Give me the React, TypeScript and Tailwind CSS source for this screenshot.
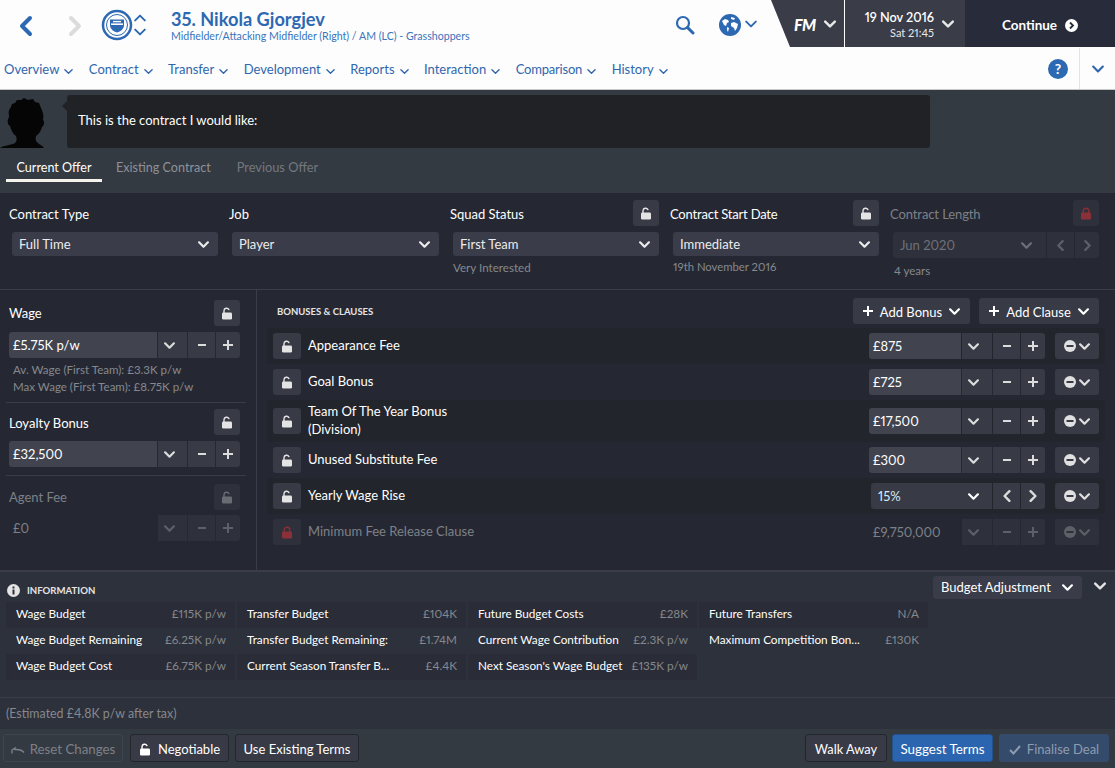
import React from 'react';

const Chev = ({ dir = 'down', size = 10, w = 2, className = '' }: { dir?: 'down' | 'up' | 'left' | 'right'; size?: number; w?: number; className?: string }) => {
    const d = {
        down: 'M1 3l4 4 4-4',
        up: 'M1 7l4-4 4 4',
        left: 'M7 1L3 5l4 4',
        right: 'M3 1l4 4-4 4',
    }[dir];
    return (
        <svg width={size} height={size} viewBox="0 0 10 10" fill="none" stroke="currentColor" strokeWidth={w} strokeLinecap="round" strokeLinejoin="round" className={className}>
            <path d={d} />
        </svg>
    );
};

const LockIcon = ({ closed = false }: { closed?: boolean }) => (
    <svg width="12" height="13" viewBox="0 0 12 13" fill="currentColor">
        {closed ? (
            <path d="M3.2 6V4a2.8 2.8 0 0 1 5.6 0v2" fill="none" stroke="currentColor" strokeWidth="1.4" />
        ) : (
            <path d="M3 6V3.8A2.6 2.6 0 0 1 7.9 2.6" fill="none" stroke="currentColor" strokeWidth="1.4" strokeLinecap="round" />
        )}
        <rect x="1" y="5.6" width="10" height="7" rx="1.4" />
    </svg>
);

const LockBtn = ({ w = 'w-[26px]', tone = 'normal' }: { w?: string; tone?: 'normal' | 'dim' | 'red' }) => {
    const cls =
        tone === 'normal'
            ? 'bg-[#383a46] text-[#e4e4e4]'
            : tone === 'dim'
              ? 'bg-[#2e303b] text-[#6a6c74]'
              : 'bg-[#2e303b] text-[#8a3038]';
    return (
        <div className={`${w} h-[26px] rounded-[3px] flex items-center justify-center shrink-0 ${cls}`}>
            <LockIcon closed={tone === 'red'} />
        </div>
    );
};

const Minus = () => <div className="w-[8px] h-[2px] bg-current" />;
const Plus = () => (
    <svg width="10" height="10" viewBox="0 0 10 10" stroke="currentColor" strokeWidth="2">
        <path d="M0 5h10M5 0v10" />
    </svg>
);

const Seg = ({ w, dim, last, children }: { w: string; dim?: boolean; last?: boolean; children: React.ReactNode }) => (
    <div className={`${w} h-full flex items-center justify-center ${dim ? 'bg-[#2e303b] text-[#5e6068]' : 'bg-[#383a46] text-[#dcdcdc]'} ${last ? 'rounded-r-[3px]' : ''}`}>
        {children}
    </div>
);

const Stepper = ({ value, inputW, chevW, dim }: { value: string; inputW: string; chevW: string; dim?: boolean }) => (
    <div className="h-[26px] flex gap-px text-[13px]">
        <div className={`${inputW} h-full rounded-l-[3px] flex items-center pl-[4px] pt-px ${dim ? 'text-[#7e8087]' : 'bg-[#41444f] text-white'}`}>{value}</div>
        <Seg w={chevW} dim={dim}><Chev size={11} className="mr-[7px]" /></Seg>
        <Seg w="w-[27px]" dim={dim}><Minus /></Seg>
        <Seg w="w-[24px]" dim={dim} last><Plus /></Seg>
    </div>
);

const RemoveBtn = ({ dim }: { dim?: boolean }) => (
    <div className={`w-[44px] h-[26px] rounded-[3px] flex items-center justify-center gap-[3px] shrink-0 ${dim ? 'bg-[#2e303b] text-[#5e6068]' : 'bg-[#383a46] text-[#e0e0e0]'}`}>
        <svg width="12" height="12" viewBox="0 0 12 12">
            <circle cx="6" cy="6" r="6" fill="currentColor" />
            <rect x="2.5" y="5" width="7" height="2" fill={dim ? '#2e303b' : '#383a46'} />
        </svg>
        <Chev size={11} />
    </div>
);

const Select = ({ label }: { label: string }) => (
    <div className="ml-[3px] h-[24px] rounded-[3px] bg-[#3a3c49] text-[#ececec] text-[13px] flex items-center justify-between pl-[7px] pr-[9px]">
        <span className="pt-px">{label}</span>
        <Chev size={11} />
    </div>
);

const bonusRows = [
    { label: 'Appearance Fee', value: '£875', h: 'h-[36px]', dark: true },
    { label: 'Goal Bonus', value: '£725', h: 'h-[36px]' },
    { label: 'Team Of The Year Bonus', label2: '(Division)', value: '£17,500', h: 'h-[42px]', dark: true },
    { label: 'Unused Substitute Fee', value: '£300', h: 'h-[36px]' },
];

const info = [
    [
        ['Wage Budget', '£115K p/w'],
        ['Transfer Budget', '£104K'],
        ['Future Budget Costs', '£28K'],
        ['Future Transfers', 'N/A'],
    ],
    [
        ['Wage Budget Remaining', '£6.25K p/w'],
        ['Transfer Budget Remaining:', '£1.74M'],
        ['Current Wage Contribution', '£2.3K p/w'],
        ['Maximum Competition Bon...', '£130K'],
    ],
    [
        ['Wage Budget Cost', '£6.75K p/w'],
        ['Current Season Transfer B...', '£4.4K'],
        ["Next Season's Wage Budget", '£135K p/w'],
    ],
];

const navItems = ['Overview', 'Contract', 'Transfer', 'Development', 'Reports', 'Interaction', 'Comparison', 'History'];

export default function App() {
    return (
        <div className="w-[1115px] h-[768px] overflow-hidden flex flex-col font-['Lato','Noto_Sans',sans-serif] proportional-nums text-[13px] bg-[#252833]">
            {/* top bar */}
            <div className="h-[48px] bg-[#fdfdfd] flex items-start shrink-0 text-[#2d68b3]">
                <svg width="16" height="22" viewBox="0 0 16 22" fill="none" stroke="#2d68b3" strokeWidth="4" strokeLinecap="round" strokeLinejoin="round" className="ml-[18px] mt-[15px]">
                    <path d="M12 3l-8 8 8 8" />
                </svg>
                <svg width="16" height="22" viewBox="0 0 16 22" fill="none" stroke="#dcdcdc" strokeWidth="4" strokeLinecap="round" strokeLinejoin="round" className="ml-[33px] mt-[15px]">
                    <path d="M4 3l8 8-8 8" />
                </svg>
                <svg width="32" height="32" viewBox="0 0 32 32" className="ml-[18px] mt-[9px]">
                    <circle cx="16" cy="16" r="14" fill="none" stroke="#2d68b3" strokeWidth="2.5" />
                    <circle cx="16" cy="16" r="10.5" fill="none" stroke="#2d68b3" strokeWidth="1" />
                    <path d="M9 10.5h14v5.5c0 4-3.5 6.5-7 7.5-3.5-1-7-3.5-7-7.5z" fill="#2d68b3" />
                    <path d="M10 15.2h12" stroke="#fdfdfd" strokeWidth="1.6" />
                    <path d="M12 12.6h8" stroke="#fdfdfd" strokeWidth="1.4" />
                </svg>
                <div className="ml-px mt-[12px] flex flex-col gap-[2px] text-[#2d68b3]">
                    <Chev dir="up" size={12} w={1.6} />
                    <Chev dir="down" size={12} w={1.6} />
                </div>
                <div className="ml-[25px] mt-[8px] leading-none">
                    <div className="text-[18.2px] font-bold leading-[22px]">35. Nikola Gjorgjev</div>
                    <div className="text-[10.6px] leading-[13px] text-[#3a74bb] whitespace-nowrap">Midfielder/Attacking Midfielder (Right) / AM (LC) - Grasshoppers</div>
                </div>
                <svg width="20" height="20" viewBox="0 0 20 20" fill="none" stroke="#2d68b3" strokeWidth="2.2" strokeLinecap="round" className="ml-auto mt-[15px]">
                    <circle cx="8" cy="8" r="6" />
                    <path d="M12.6 12.6L18 18" strokeWidth="3" />
                </svg>
                <svg width="22" height="22" viewBox="0 0 22 22" className="ml-[24px] mt-[14px]">
                    <circle cx="11" cy="11" r="11" fill="#2d68b3" />
                    <path d="M3 7l3-2 3 1 1 2-2 1-1 3-2-1-1-2zM12 3l4 1-1 2-3-1zM12 9l3-1 4 2-1 4-2 3-1-3-3-2zM8 13l2 1-1 4-1-2z" fill="#fdfdfd" />
                </svg>
                <Chev size={12} w={1.6} className="ml-[4px] mt-[18px]" />
                <div className="ml-[14px] h-[47px] flex text-white">
                    <div className="w-[73px] h-full bg-[#3a3c48] [clip-path:polygon(0_0,100%_0,100%_100%,19px_100%)] flex items-center pl-[23px] gap-[8px]">
                        <span className="font-black italic text-[16px] tracking-[-0.5px] pt-[3px]">FM</span>
                        <Chev size={12} className="text-[#e8e8e8] mt-px" />
                    </div>
                    <div className="w-[120px] h-full ml-px bg-[#3a3c48] flex items-center pr-[11px]">
                        <div className="w-[89px] text-right pt-px">
                            <div className="text-[12.7px] font-semibold leading-[16px]">19 Nov 2016</div>
                            <div className="text-[11px] leading-[15px] text-[#e8e8e8]">Sat 21:45</div>
                        </div>
                        <Chev size={12} className="ml-auto mt-px text-[#e8e8e8]" />
                    </div>
                    <div className="w-[150px] h-full bg-[#282b3a] flex items-center justify-center gap-[8px] font-bold text-[13.5px] pt-[3px]">
                        Continue
                        <svg width="13" height="13" viewBox="0 0 13 13">
                            <circle cx="6.5" cy="6.5" r="6.5" fill="#fff" />
                            <path d="M5 3.5l3 3-3 3" fill="none" stroke="#282b3a" strokeWidth="1.8" />
                        </svg>
                    </div>
                </div>
            </div>

            {/* nav */}
            <div className="h-[42px] bg-[#fdfdfd] border-b border-[#c8c8c8] shrink-0 flex items-center pl-[4px] text-[#2f66ad] text-[13px]">
                <div className="flex items-center gap-[15.5px] pt-[3px]">
                    {navItems.map(n => (
                        <div key={n} className="flex items-center gap-[5px]">
                            <span className={n === 'Comparison' ? 'tracking-[-0.2px]' : ''}>{n}</span>
                            <Chev size={9} w={1.5} className="mt-[2px]" />
                        </div>
                    ))}
                </div>
                <div className="ml-auto w-[20px] h-[20px] rounded-full bg-[#2d68b3] text-white font-bold text-[14px] flex items-center justify-center">?</div>
                <div className="ml-[11px] w-[36px] h-full border-l border-[#e4e4e4] flex items-center justify-center">
                    <Chev size={12} w={1.8} />
                </div>
            </div>

            {/* message area */}
            <div className="h-[103px] bg-[#343a42] shrink-0">
                <div className="flex h-[58px] items-start">
                    <svg width="46" height="50" viewBox="0 0 46 50" className="mt-[8px] shrink-0">
                        <path d="M0 50C4 47 12 47 15 45C17 43 17 41 16 38C13 36 11 32 10 28C8 27 7 24 8 21C9 20 9 19 9 17C8 14 9 11 11 9L12 6L15 5L17 2L21 2L24 0L28 2L33 1L35 4L39 5L41 10C43 14 44 18 43 22C45 24 44 28 42 29C41 33 39 36 36 38C35 41 36 44 38 45C40 47 42 47 44 50Z" fill="#050505" />
                    </svg>
                    <svg width="5" height="10" viewBox="0 0 5 10" className="mt-[11px] ml-[16px] shrink-0">
                        <path d="M5 0v10L0 5z" fill="#202226" />
                    </svg>
                    <div className="mt-[5px] w-[863px] h-[53px] bg-[#202226] rounded-[3px] text-white text-[13px] flex items-center pl-[11px] pb-[2px]">
                        This is the contract I would like:
                    </div>
                </div>
                <div className="flex pl-[6px] mt-[7px] h-[27px] text-[12.6px]">
                    <div className="w-[96px] h-full border-b-[3px] border-[#f4f4ec] text-white flex items-center justify-center pt-[2px]">Current Offer</div>
                    <div className="ml-[14px] text-[#8d9198] flex items-center pb-px">Existing Contract</div>
                    <div className="ml-[26px] text-[#737880] flex items-center pb-px text-[12.8px]">Previous Offer</div>
                </div>
            </div>

            {/* contract fields */}
            <div className="h-[97px] shrink-0 border-b border-[#3a3d47] pl-[9px] pt-[7px] grid grid-cols-[220px_221px_220px_220px_220px] text-white">
                <div className="pr-[11px]">
                    <div className="h-[26px] flex items-center"><span className="mt-[4px]">Contract Type</span></div>
                    <div className="mt-[6px]"><Select label="Full Time" /></div>
                </div>
                <div className="pr-[11px]">
                    <div className="h-[26px] flex items-center"><span className="mt-[4px]">Job</span></div>
                    <div className="mt-[6px]"><Select label="Player" /></div>
                </div>
                <div className="pr-[11px]">
                    <div className="h-[26px] flex items-center justify-between"><span className="mt-[4px]">Squad Status</span><LockBtn /></div>
                    <div className="mt-[6px]"><Select label="First Team" /></div>
                    <div className="ml-[3px] mt-[3px] text-[11.6px] text-[#85888e]">Very Interested</div>
                </div>
                <div className="pr-[11px]">
                    <div className="h-[26px] flex items-center justify-between"><span className="mt-[4px] tracking-[-0.2px]">Contract Start Date</span><LockBtn /></div>
                    <div className="mt-[6px]"><Select label="Immediate" /></div>
                    <div className="ml-[3px] mt-[3px] text-[11.3px] text-[#85888e]">19th November 2016</div>
                </div>
                <div className="pr-[11px]">
                    <div className="h-[26px] flex items-center justify-between text-[#7e8087]"><span className="mt-[4px] tracking-[-0.1px]">Contract Length</span><LockBtn tone="red" /></div>
                    <div className="mt-[6px] ml-[3px] h-[26px] flex gap-px text-[#6f7178]">
                        <div className="flex-1 h-full bg-[#2e303b] rounded-l-[3px] flex items-center justify-between pl-[7px] pr-[14px]">
                            <span className="text-[13px] pt-px">Jun 2020</span>
                            <Chev size={11} />
                        </div>
                        <Seg w="w-[27px]" dim><Chev dir="left" size={11} /></Seg>
                        <Seg w="w-[24px]" dim last><Chev dir="right" size={11} /></Seg>
                    </div>
                    <div className="ml-[4px] mt-[4px] text-[11.5px] text-[#85888e]">4 years</div>
                </div>
            </div>

            {/* wage + bonuses */}
            <div className="h-[281px] shrink-0 flex border-b border-[#3a3d47] text-white">
                <div className="w-[257px] shrink-0 border-r border-[#3a3d47] pt-[10px]">
                    <div className="pl-[9px] pr-[16px]">
                        <div className="h-[26px] flex items-center justify-between"><span className="mt-[2px]">Wage</span><LockBtn /></div>
                        <div className="mt-[6px]"><Stepper value="£5.75K p/w" inputW="w-[148px]" chevW="w-[29px]" /></div>
                        <div className="mt-[3px] ml-[4px] text-[11.55px] leading-[17px] text-[#85888e]">
                            <div>Av. Wage (First Team): £3.3K p/w</div>
                            <div>Max Wage (First Team): £8.75K p/w</div>
                        </div>
                    </div>
                    <div className="ml-[6px] mr-[10px] mt-[7px] border-t border-[#3a3d47]" />
                    <div className="pl-[9px] pr-[16px] mt-[6px]">
                        <div className="h-[26px] flex items-center justify-between"><span className="mt-[4px]">Loyalty Bonus</span><LockBtn /></div>
                        <div className="mt-[6px]"><Stepper value="£32,500" inputW="w-[148px]" chevW="w-[29px]" /></div>
                    </div>
                    <div className="ml-[6px] mr-[10px] mt-[8px] border-t border-[#3a3d47]" />
                    <div className="pl-[9px] pr-[16px] mt-[8px]">
                        <div className="h-[26px] flex items-center justify-between text-[#7e8087]"><span className="mt-[2px]">Agent Fee</span><LockBtn tone="dim" /></div>
                        <div className="mt-[5px]"><Stepper value="£0" inputW="w-[148px]" chevW="w-[29px]" dim /></div>
                    </div>
                </div>
                <div className="flex-1 pl-[10px] pt-[8px]">
                    <div className="h-[26px] flex items-center pl-[10px] pr-[16px]">
                        <span className="text-[9.5px] font-bold text-[#e4e4e4] mt-[2px]">BONUSES &amp; CLAUSES</span>
                        <div className="ml-auto w-[117px] h-[26px] rounded-[3px] bg-[#383a46] flex items-center justify-between px-[10px]">
                            <Plus /><span className="mt-[4px]">Add Bonus</span><Chev size={11} />
                        </div>
                        <div className="ml-[9px] w-[120px] h-[26px] rounded-[3px] bg-[#383a46] flex items-center justify-between px-[10px]">
                            <Plus /><span className="mt-[4px]">Add Clause</span><Chev size={11} />
                        </div>
                    </div>
                    <div className="mt-[4px] w-[838px]">
                        {bonusRows.map(r => (
                            <div key={r.label} className={`${r.h} flex items-center pl-[6px] pr-[6px] ${r.dark ? 'bg-[#23252c]' : ''}`}>
                                <LockBtn w="w-[28px]" />
                                <div className="ml-[7px] mb-[2px] leading-[18px]">
                                    <div>{r.label}</div>
                                    {r.label2 && <div>{r.label2}</div>}
                                </div>
                                <div className="ml-auto"><Stepper value={r.value} inputW="w-[92px]" chevW="w-[30px]" /></div>
                                <div className="ml-[10px]"><RemoveBtn /></div>
                            </div>
                        ))}
                        <div className="h-[36px] flex items-center pl-[6px] pr-[6px] bg-[#23252c]">
                            <LockBtn w="w-[28px]" />
                            <div className="ml-[7px]">Yearly Wage Rise</div>
                            <div className="ml-auto h-[26px] flex gap-px">
                                <div className="w-[121px] h-full rounded-l-[3px] bg-[#383a46] flex items-center justify-between pl-[7px] pr-[13px]">
                                    <span className="text-[#d8ecf4] pt-px">15%</span>
                                    <Chev size={11} />
                                </div>
                                <Seg w="w-[27px]"><Chev dir="left" size={12} /></Seg>
                                <Seg w="w-[24px]" last><Chev dir="right" size={12} /></Seg>
                            </div>
                            <div className="ml-[10px]"><RemoveBtn /></div>
                        </div>
                        <div className="h-[36px] flex items-center pl-[6px] pr-[6px] text-[#7e8087]">
                            <LockBtn w="w-[28px]" tone="red" />
                            <div className="ml-[7px]">Minimum Fee Release Clause</div>
                            <div className="ml-auto"><Stepper value="£9,750,000" inputW="w-[92px]" chevW="w-[30px]" dim /></div>
                            <div className="ml-[10px]"><RemoveBtn dim /></div>
                        </div>
                    </div>
                </div>
            </div>

            {/* information */}
            <div className="h-[127px] shrink-0 bg-[#2d313b] border-t border-[#3a3d47] border-b pl-[6px] text-white">
                <div className="h-[30px] flex items-center">
                    <svg width="13" height="13" viewBox="0 0 13 13" className="ml-px mt-[6px]">
                        <circle cx="6.5" cy="6.5" r="6.5" fill="#e4e4e4" />
                        <rect x="5.5" y="5.5" width="2" height="5" fill="#2d313b" />
                        <rect x="5.5" y="2.5" width="2" height="2" fill="#2d313b" />
                    </svg>
                    <span className="ml-[7px] mt-[8px] text-[9.6px] font-bold text-[#e4e4e4]">INFORMATION</span>
                    <div className="ml-auto w-[149px] h-[23px] rounded-[3px] bg-[#3a3c49] flex items-center justify-between pl-[8px] pr-[9px]">
                        <span className="pt-px">Budget Adjustment</span><Chev size={11} />
                    </div>
                    <Chev size={12} className="ml-[12px] mr-[9px] mb-[2px] text-[#e4e4e4]" />
                </div>
                <div className="grid grid-cols-[231px_231px_231px_231px] w-[924px] text-[11.75px]">
                    {info.map((row, i) =>
                        [0, 1, 2, 3].map(j =>
                            row[j] ? (
                                <div key={`${i}-${j}`} className={`h-[26px] mr-[2px] pl-[10px] pr-[9px] pb-[2px] flex items-center justify-between whitespace-nowrap ${i !== 1 ? 'bg-[#2a2d37]' : ''}`}>
                                    <span>{row[j][0]}</span>
                                    <span className="text-[#85888e]">{row[j][1]}</span>
                                </div>
                            ) : (
                                <div key={`${i}-${j}`} />
                            ),
                        ),
                    )}
                </div>
            </div>

            {/* estimate */}
            <div className="h-[31px] shrink-0 bg-[#2d313b] flex items-center pl-[6px] pt-[2px] text-[12.4px] text-[#85888e]">(Estimated £4.8K p/w after tax)</div>

            {/* footer */}
            <div className="flex-1 bg-[#343a42] flex items-center px-[3px] pb-[1px] text-white">
                <div className="w-[120px] h-[28px] rounded-[3px] bg-[#343a42] border border-[#3f454e] text-[#7e8087] flex items-center justify-center gap-[5px] pt-[3px] text-[13.3px]">
                    <svg width="14" height="8" viewBox="0 0 14 8" fill="none" stroke="currentColor" strokeWidth="1.4">
                        <path d="M1 7.5V4l3-2v1.5c3 0 6-.5 9 3" />
                    </svg>
                    Reset Changes
                </div>
                <div className="ml-[7px] w-[99px] h-[28px] rounded-[3px] bg-[#383a46] border border-[#24262e] flex items-center justify-center gap-[7px] pt-[3px]">
                    <LockIcon />Negotiable
                </div>
                <div className="ml-[6px] w-[124px] h-[28px] rounded-[3px] bg-[#383a46] border border-[#24262e] flex items-center justify-center pt-[3px]">Use Existing Terms</div>
                <div className="ml-auto w-[82px] h-[28px] rounded-[3px] bg-[#383a46] border border-[#24262e] flex items-center justify-center pt-[3px] text-[12.8px]">Walk Away</div>
                <div className="ml-[5px] w-[101px] h-[28px] rounded-[3px] bg-[#2b65b0] border border-[#24508c] flex items-center justify-center pt-[3px] text-[13.4px]">Suggest Terms</div>
                <div className="ml-[6px] mr-[3px] w-[110px] h-[28px] rounded-[3px] bg-[#344b6b] text-[#8f9cb0] flex items-center justify-center gap-[6px] pt-[3px]">
                    <svg width="12" height="10" viewBox="0 0 12 10" fill="none" stroke="currentColor" strokeWidth="2">
                        <path d="M1 5l3.5 3.5L11 1" />
                    </svg>
                    Finalise Deal
                </div>
            </div>
        </div>
    );
}
